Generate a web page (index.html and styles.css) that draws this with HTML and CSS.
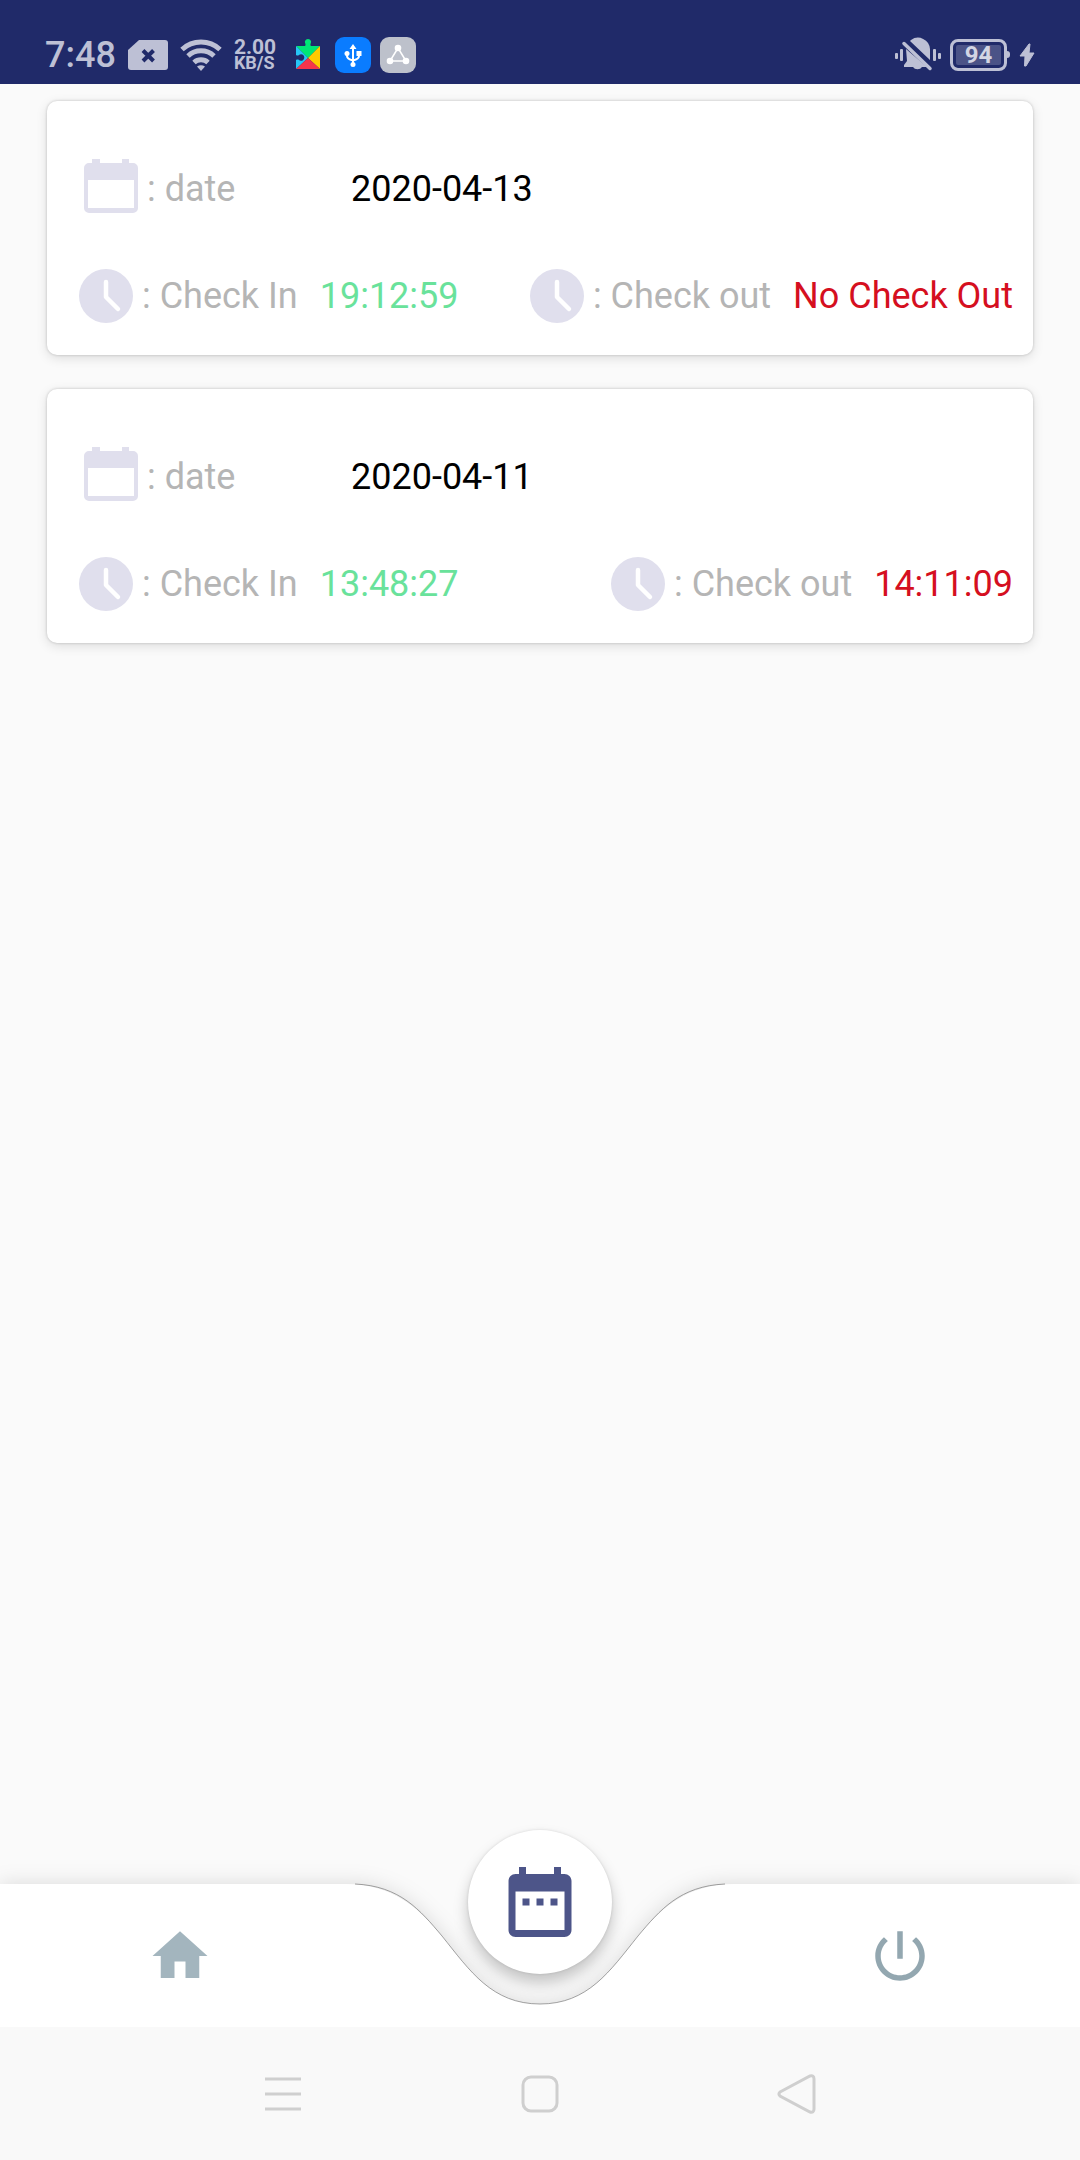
FILE: index.html
```html
<!DOCTYPE html>
<html lang="en">
<head>
  <meta charset="UTF-8" />
  <meta name="viewport" content="width=device-width, initial-scale=1.0"/>
  <title>Attendance History</title>
  <link rel="stylesheet" href="styles.css">
</head>
<body>

<!-- shared icons -->
<svg class="sprite" aria-hidden="true">
  <symbol id="calendar" viewBox="0 0 54 60">
    <path fill="#e0dfed" fill-rule="evenodd" d="M8 0h8v4h22V0h7v4h4a5 5 0 0 1 5 5v40a5 5 0 0 1-5 5H5a5 5 0 0 1-5-5V9a5 5 0 0 1 5-5h3zM4 21v28h46V21z"/>
  </symbol>
  <symbol id="clock" viewBox="0 0 54 54">
    <circle cx="27" cy="27" r="27" fill="#e0dfed"/>
    <path d="M27 13v15l12 12" fill="none" stroke="#fff" stroke-width="4.5" stroke-linecap="round" stroke-linejoin="round"/>
  </symbol>
</svg>

<header class="status-bar">
  <div class="status-group">
    <span class="time">7:48</span>
    <svg width="40" height="30" viewBox="0 0 40 30">
      <path fill="#bdc0d5" d="M11 0h26a3 3 0 0 1 3 3v24a3 3 0 0 1-3 3H3a3 3 0 0 1-3-3V10z"/>
      <path stroke="#202a69" stroke-width="4" d="M15 10.500l10.500 10.500M25.500 10.500L15 21"/>
    </svg>
    <svg width="42" height="34" viewBox="0 0 42 34">
      <g fill="none" stroke="#bdc0d5" stroke-width="5">
        <path d="M2 11.500a28 28 0 0 1 38 0"/>
        <path d="M8 18a19 19 0 0 1 26 0"/>
        <path d="M14 24.500a10.500 10.500 0 0 1 14 0"/>
      </g>
      <path fill="#bdc0d5" d="M17 28.500q4-2.500 8 0L21 33z"/>
    </svg>
    <span class="speed">2.00<small>KB/S</small></span>
  </div>
  <div class="status-group apps">
    <svg width="36" height="36" viewBox="0 0 36 36">
      <path fill="#00e676" d="M6 9h9c1.500-1.500-.5-3 0-5a3.300 3.300 0 0 1 6 0c.5 2-1.500 3.500 0 5h9L18 21z"/>
      <path fill="#26c6f5" d="M6 9l12 12L6 32z"/>
      <path fill="#ffca00" d="M30 9v23L18 21z"/>
      <path fill="#f5354b" d="M6 32l12-11 12 11z"/>
      <path fill="#202a69" d="M6 18c2 1.200 2.500 0 4-.5a3.200 3.200 0 1 1 0 6c-1.500-.6-2-1.700-4-.5z"/>
    </svg>
    <svg width="36" height="36" viewBox="0 0 36 36">
      <rect width="36" height="36" rx="9" fill="#0a7cff"/>
      <path d="M18 11v17M12 17v2q0 3 6 4.500M24 17v2q0 3-6 4.500" fill="none" stroke="#fff" stroke-width="2"/>
      <path fill="#fff" d="M18 7l3.500 5h-7zM21.500 14h5v5h-5z"/>
      <circle cx="12" cy="16.500" r="2.500" fill="#fff"/>
      <circle cx="18" cy="27.500" r="2.500" fill="#fff"/>
    </svg>
    <svg width="36" height="36" viewBox="0 0 36 36">
      <rect width="36" height="36" rx="9" fill="#bdc1cb"/>
      <path d="M18 11l-8 13M18 11l8 13M10 24h16" stroke="#fff" stroke-width="1.500"/>
      <circle cx="18" cy="11" r="3.300" fill="#fff"/>
      <circle cx="10" cy="24" r="3.300" fill="#fff"/>
      <circle cx="26" cy="24" r="3.300" fill="#fff"/>
    </svg>
  </div>
  <div class="status-group apps right">
    <svg width="46" height="36" viewBox="0 0 46 36">
      <g fill="#bdc0d5">
        <rect y="16" width="3" height="6" rx="1"/>
        <rect x="5" y="12" width="3" height="12" rx="1"/>
        <rect x="38" y="12" width="3" height="12" rx="1"/>
        <rect x="43" y="16" width="3" height="6" rx="1"/>
        <path d="M16 3a12 12 0 0 1 19 9v11L15 4z"/>
        <path d="M11 12l21 18h-5a5 4 0 0 1-9 0h-9v-2l3-4z"/>
      </g>
      <path d="M9 6.500l26 25" stroke="#bdc0d5" stroke-width="3.500" stroke-linecap="round"/>
    </svg>
    <span class="battery"><span class="level">94</span></span>
    <svg width="16" height="24" viewBox="0 0 16 24">
      <path fill="#bdc0d5" stroke="#bdc0d5" stroke-linejoin="round" d="M10 1L1 13h5L5.500 23h1.500L15 10h-5l1-9z"/>
    </svg>
  </div>
</header>

<main class="records">
  <article class="card">
    <div class="row date-row">
      <svg width="54" height="60"><use href="#calendar"/></svg>
      <span class="label">: date</span>
      <span class="date">2020-04-13</span>
    </div>
    <div class="row">
      <div class="entry">
        <svg width="54" height="54"><use href="#clock"/></svg>
        <span class="label">: Check In</span>
        <span class="value in">19:12:59</span>
      </div>
      <div class="entry">
        <svg width="54" height="54"><use href="#clock"/></svg>
        <span class="label">: Check out</span>
        <span class="value out">No Check Out</span>
      </div>
    </div>
  </article>

  <article class="card">
    <div class="row date-row">
      <svg width="54" height="60"><use href="#calendar"/></svg>
      <span class="label">: date</span>
      <span class="date">2020-04-11</span>
    </div>
    <div class="row">
      <div class="entry">
        <svg width="54" height="54"><use href="#clock"/></svg>
        <span class="label">: Check In</span>
        <span class="value in">13:48:27</span>
      </div>
      <div class="entry">
        <svg width="54" height="54"><use href="#clock"/></svg>
        <span class="label">: Check out</span>
        <span class="value out">14:11:09</span>
      </div>
    </div>
  </article>
</main>

<nav class="tab-bar">
  <svg class="tab-shape" viewBox="0 0 1080 143" preserveAspectRatio="none" aria-hidden="true">
    <path fill="#fff" d="M0 0H345C395 0 420 26 442 52C470 87 492 120 540 120S610 87 638 52C660 26 685 0 735 0H1080V143H0z"/>
    <path fill="none" stroke="#666" stroke-width="0.600" d="M355 0C400 2 420 26 442 52C470 87 492 120 540 120S610 87 638 52C660 26 680 2 725 0"/>
  </svg>
  <button class="tab" aria-label="Home">
    <svg width="66" height="66" viewBox="0 0 24 24"><path fill="#a3b5be" d="M10 20v-6h4v6h5v-8h3L12 3 2 12h3v8z"/></svg>
  </button>
  <button class="tab active" aria-label="History">
    <svg width="84" height="84" viewBox="0 0 24 24"><path fill="#4d5589" d="M9 11H7v2h2v-2zm4 0h-2v2h2v-2zm4 0h-2v2h2v-2zm2-7h-1V2h-2v2H8V2H6v2H5c-1.110 0-1.990.9-1.990 2L3 20c0 1.100.89 2 2 2h14c1.100 0 2-.9 2-2V6c0-1.100-.9-2-2-2zm0 16H5V9h14v11z"/></svg>
  </button>
  <button class="tab" aria-label="Log out">
    <svg width="66" height="66" viewBox="0 0 24 24"><path fill="#93a7b0" d="M13 3h-2v10h2V3zm4.830 2.170l-1.420 1.420C17.990 7.860 19 9.810 19 12c0 3.870-3.130 7-7 7s-7-3.130-7-7c0-2.190 1.010-4.140 2.580-5.420L6.170 5.170C4.230 6.820 3 9.260 3 12c0 4.970 4.030 9 9 9s9-4.030 9-9c0-2.740-1.230-5.180-3.170-6.830z"/></svg>
  </button>
</nav>

<footer class="system-nav">
  <button aria-label="Recent apps">
    <svg width="40" height="40" viewBox="0 0 40 40"><path d="M2 5h36M2 20h36M2 35h36"/></svg>
  </button>
  <button aria-label="Home screen">
    <svg width="40" height="40" viewBox="0 0 40 40"><rect x="3" y="3" width="34" height="34" rx="8"/></svg>
  </button>
  <button aria-label="Back">
    <svg width="40" height="40" viewBox="0 0 40 40"><path d="M3 18L33 2q4-1 4 3v30q0 4-4 3L3 22q-2-2 0-4z"/></svg>
  </button>
</footer>

</body>
</html>
```

FILE: styles.css
```css
* {
  box-sizing: border-box;
}

body {
  display: flex;
  flex-direction: column;
  min-height: 100vh;
  margin: 0;
  background: #fafafa;
  font-family: Roboto, 'Liberation Sans', sans-serif;
  font-size: 36px;
  line-height: 42px;
}

svg {
  display: block;
  flex: none;
}

button {
  padding: 0;
  border: none;
  background: none;
  cursor: pointer;
}

.sprite {
  position: absolute;
  width: 0;
  height: 0;
}

/* status bar */
.status-bar {
  display: flex;
  gap: 14px;
  height: 84px;
  padding: 25px 45px 0;
  background: #202a69;
  color: #bdc0d5;
}

.status-group {
  display: flex;
  align-items: center;
  gap: 12px;
  font-weight: 500;
}

.apps {
  gap: 9px;
}

.right {
  margin-left: auto;
}

.speed {
  font-size: 21px;
  font-weight: 700;
  line-height: 16px;
}

.speed small {
  display: block;
  font-size: 18px;
}

.battery {
  display: flex;
  align-items: center;
  width: 60px;
}

.battery::after {
  content: "";
  width: 3px;
  height: 7px;
  border-radius: 0 3px 3px 0;
  background: #bdc0d5;
}

.level {
  flex: 1;
  height: 32px;
  border: 3px solid #bdc0d5;
  border-radius: 8px;
  background: #4b5387;
  box-shadow: inset 0 0 0 3px #202a69;
  color: #d3d5e3;
  font-size: 24px;
  font-weight: 700;
  line-height: 27px;
  text-align: center;
}

/* attendance cards */
.records {
  display: flex;
  flex: 1;
  flex-direction: column;
  gap: 34px;
  padding: 17px 47px;
}

.card {
  display: flex;
  flex-direction: column;
  gap: 50px;
  padding: 58px 20px 32px 32px;
  border-radius: 10px;
  background: #fff;
  box-shadow: 0 0 3px rgba(0, 0, 0, 0.2), 0 3px 12px rgba(0, 0, 0, 0.12);
}

.row {
  display: flex;
  justify-content: space-between;
}

.date-row {
  align-items: center;
  justify-content: flex-start;
  gap: 9px;
  padding-left: 5px;
}

.date-row .label {
  width: 195px;
}

.entry {
  display: flex;
  align-items: center;
  gap: 9px;
  white-space: nowrap;
}

.label {
  color: #b5b5b5;
}

.date {
  color: #000;
}

.value {
  margin-left: 13px;
}

.in {
  color: #69e29b;
}

.out {
  color: #d50f20;
}

/* bottom tabs */
.tab-bar {
  display: grid;
  grid-template-rows: 100%;
  grid-template-columns: repeat(3, 1fr);
  align-items: center;
  justify-items: center;
  position: relative;
  height: 143px;
}

.tab-shape {
  position: absolute;
  inset: 0;
  width: 100%;
  height: 100%;
  overflow: visible;
  filter: drop-shadow(0 0 10px rgba(0, 0, 0, 0.13));
}

.tab {
  position: relative;
}

/* round button sits above the dip in the bar */
.active {
  display: grid;
  place-items: center;
  width: 144px;
  height: 144px;
  margin-bottom: 108px;
  border-radius: 50%;
  background: #fff;
  box-shadow: 0 0 3px rgba(0, 0, 0, 0.12), 0 9px 15px rgba(0, 0, 0, 0.22);
}

/* system buttons */
.system-nav {
  display: grid;
  grid-template-columns: repeat(3, 1fr);
  align-items: center;
  justify-items: center;
  position: relative;
  height: 133px;
  padding: 0 155px;
  background: #f9f9f9;
}

.system-nav svg {
  fill: none;
  stroke: #cfcfcf;
  stroke-width: 3;
}
```
